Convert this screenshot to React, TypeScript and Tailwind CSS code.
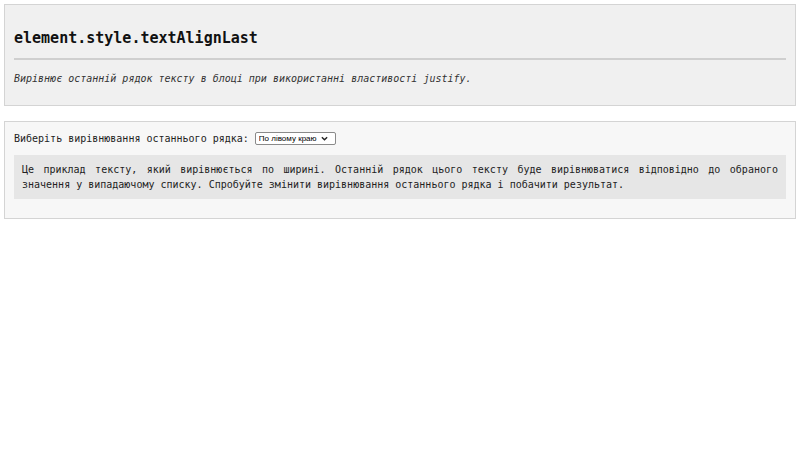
import { useState } from "react";

const mono = "font-['DejaVu_Sans_Mono','Liberation_Mono',monospace]";

export default function App() {
  const [align, setAlign] = useState("left");

  return (
    <div className={`min-h-[450px] bg-white p-[4px] text-[#222] ${mono}`}>
      <div className="border border-[#d4d4d4] bg-[#f0f0f0] px-[9px] pt-[24px] pb-[19px]">
        <h1 className="text-[15px] leading-[18px] font-bold text-[#111]">element.style.textAlignLast</h1>
        <hr className="mt-[11px] border-t-2 border-[#cfcfcf]" />
        <p className="mt-[11px] text-[10px] leading-[15px] italic text-[#333]">
          Вирівнює останній рядок тексту в блоці при використанні властивості justify.
        </p>
      </div>

      <div className="mt-[15px] border border-[#d4d4d4] bg-[#f7f7f7] px-[9px] pt-[9px] pb-[19px]">
        <div className="flex h-[15px] items-center text-[10px] leading-[15px]">
          <label htmlFor="align" className="whitespace-pre">
            Виберіть вирівнювання останнього рядка:{" "}
          </label>
          <div className="relative">
            <select
              id="align"
              value={align}
              onChange={(e) => setAlign(e.target.value)}
              className="block h-[13px] w-[81px] appearance-none rounded-[2px] border border-[#8a8a8a] bg-white pr-[14px] pl-[3px] font-['Liberation_Sans',Arial,sans-serif] text-[8px] leading-[11px] text-black"
            >
              <option value="left">По лівому краю</option>
              <option value="right">По правому краю</option>
              <option value="center">По центру</option>
              <option value="justify">По ширині</option>
            </select>
            <svg
              viewBox="0 0 8 5"
              className="pointer-events-none absolute top-[4px] right-[8px] h-[5px] w-[7px]"
              fill="none"
              stroke="#222"
              strokeWidth={1.6}
              aria-hidden
            >
              <path d="M1 1l3 3 3-3" />
            </svg>
          </div>
        </div>
        <p
          className="mt-[9px] bg-[#e6e6e6] px-[8px] py-[7px] text-justify text-[10px] leading-[15px]"
          style={{ textAlignLast: align as "left" }}
        >
          Це приклад тексту, який вирівнюється по ширині. Останній рядок цього тексту буде вирівнюватися відповідно до
          обраного значення у випадаючому списку. Спробуйте змінити вирівнювання останнього рядка і побачити результат.
        </p>
      </div>
    </div>
  );
}
